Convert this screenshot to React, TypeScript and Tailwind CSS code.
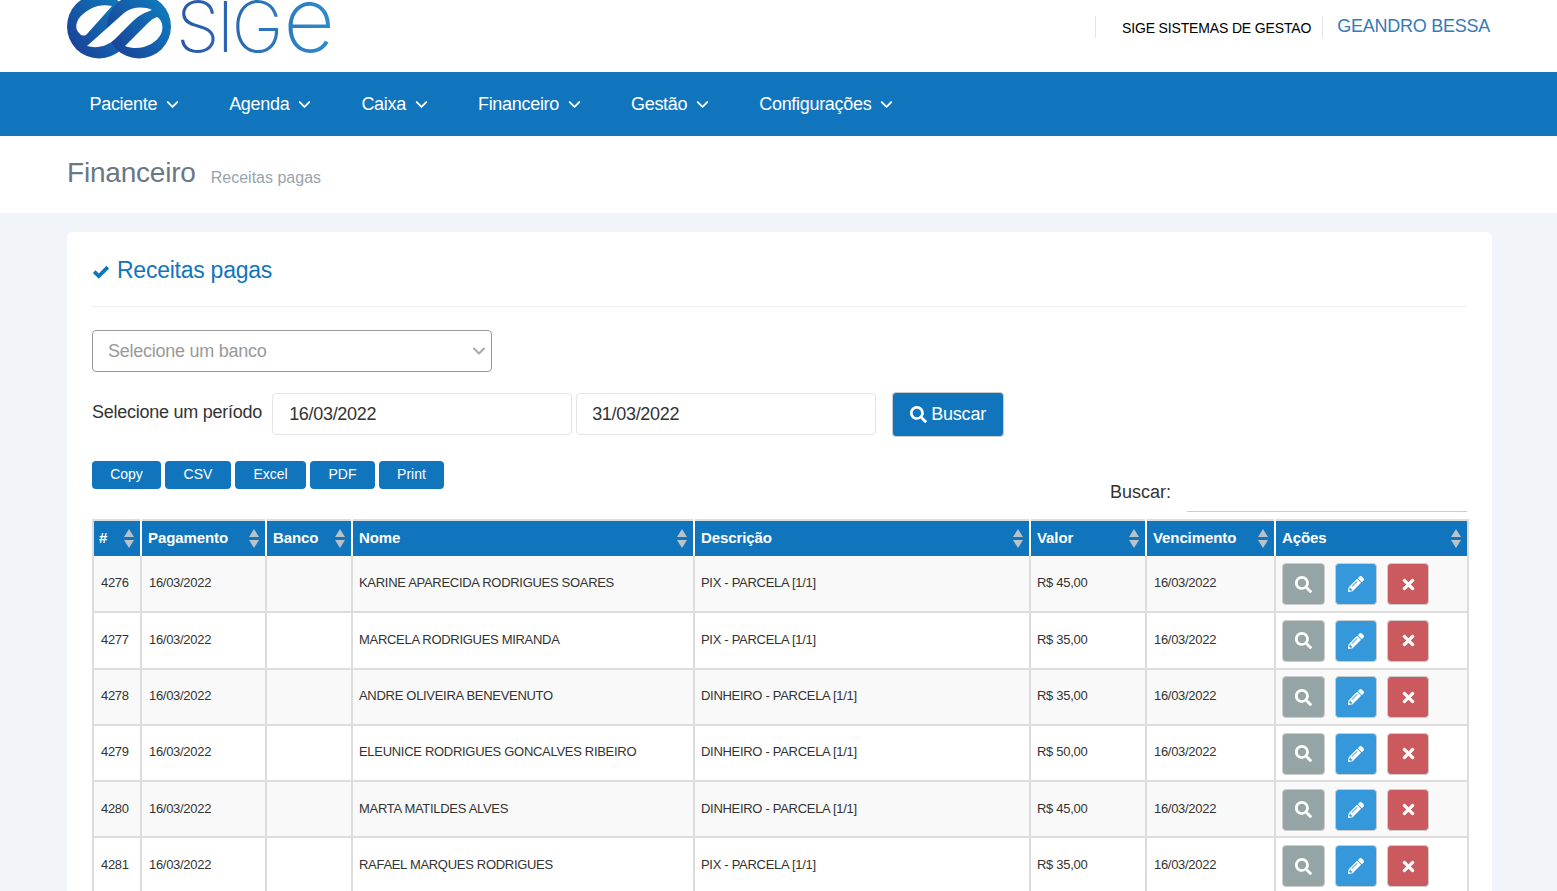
import { ChevronDown } from "lucide-react";
import { FaPencilAlt, FaSearch, FaTimes } from "react-icons/fa";

const menu = ["Paciente", "Agenda", "Caixa", "Financeiro", "Gestão", "Configurações"];

const rows = [
  { id: "4276", nome: "KARINE APARECIDA RODRIGUES SOARES", desc: "PIX - PARCELA [1/1]", valor: "R$ 45,00" },
  { id: "4277", nome: "MARCELA RODRIGUES MIRANDA", desc: "PIX - PARCELA [1/1]", valor: "R$ 35,00" },
  { id: "4278", nome: "ANDRE OLIVEIRA BENEVENUTO", desc: "DINHEIRO - PARCELA [1/1]", valor: "R$ 35,00" },
  { id: "4279", nome: "ELEUNICE RODRIGUES GONCALVES RIBEIRO", desc: "DINHEIRO - PARCELA [1/1]", valor: "R$ 50,00" },
  { id: "4280", nome: "MARTA MATILDES ALVES", desc: "DINHEIRO - PARCELA [1/1]", valor: "R$ 45,00" },
  { id: "4281", nome: "RAFAEL MARQUES RODRIGUES", desc: "PIX - PARCELA [1/1]", valor: "R$ 35,00" },
];

const heads = ["#", "Pagamento", "Banco", "Nome", "Descrição", "Valor", "Vencimento", "Ações"];

function Logo() {
  return (
    <div className="flex h-[60px] items-start">
      <svg width="105" height="60" viewBox="67 0 105 60" className="shrink-0" aria-hidden>
        <defs>
          <linearGradient id="mark" x1="0" y1="1" x2="1" y2="0.3">
            <stop offset="0" stopColor="#1b3a93" />
            <stop offset="1" stopColor="#0f7bbd" />
          </linearGradient>
        </defs>
        <circle cx="99" cy="26.5" r="32" fill="url(#mark)" />
        <circle cx="139" cy="26.5" r="32" fill="url(#mark)" />
        <path d="M112 6C100 3 88 8 80 17C75 23 75 30 80 34C82 36 85 36 87 34Z" fill="#fff" />
        <path d="M87 46L124 13C132 7 143 6 152 10C143 13 137 17 132 22L115 39C108 46 97 49 87 46Z" fill="#fff" />
        <path d="M125 46L148 23C151 20 154 18 157 17C162 20 164 27 161 34C156 44 140 52 125 46Z" fill="#fff" />
      </svg>
      <div className="ml-[4px] flex h-[60px] items-baseline bg-gradient-to-r from-[#2a55a8] to-[#2f8ccb] bg-clip-text font-['Inter'] leading-[40px] font-extralight text-transparent">
        <span className="text-[70px] tracking-[-3px]">SIG</span>
        <span className="ml-[3px] text-[90px]">e</span>
      </div>
    </div>
  );
}

function SortArrows() {
  return (
    <svg width="10" height="19" viewBox="0 0 10 19" className="shrink-0" aria-hidden>
      <path d="M5 0L10 8H0Z" fill="#b9c2c9" />
      <path d="M5 19L0 11H10Z" fill="#b9c2c9" />
    </svg>
  );
}

function ActionButton({ color, children }: { color: string; children: React.ReactNode }) {
  return (
    <button className={`flex h-[42px] items-center justify-center rounded-[4px] border border-[#ccc] text-white ${color}`}>
      {children}
    </button>
  );
}

export default function App() {
  return (
    <div className="h-[891px] overflow-hidden bg-[#f1f5fa] font-['Liberation_Sans',sans-serif] text-[#333]">
      <header className="flex h-[72px] items-start justify-between bg-white pr-[67px] pl-[67px]">
        <Logo />
        <div className="mt-4 flex items-start">
          <div className="flex h-[22px] items-center border-l border-[#e5e5e5] pt-[2px] pr-[11px] pl-[26px] text-sm tracking-[-0.15px] text-black">
            SIGE SISTEMAS DE GESTAO
          </div>
          <div className="flex h-[22px] items-center border-l border-[#e5e5e5] pb-[2px] pl-[14px] text-lg tracking-[-0.25px] text-[#337ab7]">
            GEANDRO BESSA
          </div>
        </div>
      </header>

      <nav className="flex h-16 items-center gap-[47px] bg-[#1075bd] pl-[89.5px] text-lg tracking-[-0.3px] text-white">
        {menu.map((item) => (
          <div key={item} className="flex items-center gap-[6px]">
            {item}
            <ChevronDown size={19} strokeWidth={2.4} />
          </div>
        ))}
      </nav>

      <div className="flex h-[77px] items-center gap-[15px] bg-white pb-1 pl-[67px]">
        <span className="text-[28px] tracking-[-0.2px] text-[#697882]">Financeiro</span>
        <span className="mt-[10px] text-base text-[#9aa4ab]">Receitas pagas</span>
      </div>

      <main className="mt-[19px] ml-[67px] h-[700px] w-[1425px] rounded-t-[6px] bg-white px-[25px]">
        <div className="flex h-[75px] items-center gap-[7px] border-b border-[#eee] pt-[2px] text-[23px] tracking-[-0.25px] text-[#1075bd]">
          <svg width="18" height="14" viewBox="0 0 18 14" className="mt-[3px] shrink-0" aria-hidden>
            <polyline points="2.2,6.6 6.8,11 15.8,2.2" fill="none" stroke="currentColor" strokeWidth="3.8" />
          </svg>
          Receitas pagas
        </div>

        <div className="mt-[23px] flex h-[42px] w-[400px] items-center justify-between rounded-[4px] border border-[#999] pr-[2px] pl-[15px] text-lg tracking-[-0.25px] text-[#999]">
          Selecione um banco
          <ChevronDown size={20} strokeWidth={2.5} className="text-[#aaa]" />
        </div>

        <div className="mt-[19px] flex h-[46px] items-center">
          <span className="mb-[4px] text-lg tracking-[-0.25px]">Selecione um período</span>
          <div className="ml-[10px] flex h-[42px] w-[300px] items-center rounded-[4px] border border-[#e5e5e5] pl-4 text-lg tracking-[-0.3px]">
            16/03/2022
          </div>
          <div className="ml-1 flex h-[42px] w-[300px] items-center rounded-[4px] border border-[#e5e5e5] pl-[15px] text-lg tracking-[-0.3px]">
            31/03/2022
          </div>
          <button className="ml-4 flex h-[45px] w-[112px] items-center justify-center gap-[4px] rounded-[4px] border border-[#ccc] bg-[#1075bd] text-lg tracking-[-0.2px] text-white">
            <FaSearch size={17} />
            Buscar
          </button>
        </div>

        <div className="flex h-[82px] items-start justify-between">
          <div className="mt-[24px] flex gap-1">
            {[
              ["Copy", "w-[69px]"],
              ["CSV", "w-[66px]"],
              ["Excel", "w-[71px]"],
              ["PDF", "w-[65px]"],
              ["Print", "w-[65px]"],
            ].map(([label, w]) => (
              <button key={label} className={`h-7 rounded-[4px] bg-[#1075bd] pb-[2px] text-sm text-white ${w}`}>
                {label}
              </button>
            ))}
          </div>
          <div className="mt-[37px] flex items-center gap-4">
            <span className="pb-[3px] text-lg">Buscar:</span>
            <div className="h-[38px] w-[280px] border-b border-[#ccc]" />
          </div>
        </div>

        <table className="w-[1375px] table-fixed border-collapse border-t-[2px] border-r-[2px] border-l-[2px] border-[#ddd] text-[13px] tracking-[-0.3px]">
          <colgroup>
            <col className="w-[48px]" />
            <col className="w-[125px]" />
            <col className="w-[86px]" />
            <col className="w-[342px]" />
            <col className="w-[336px]" />
            <col className="w-[116px]" />
            <col className="w-[129px]" />
            <col className="w-[193px]" />
          </colgroup>
          <thead>
            <tr className="h-9 bg-[#1075bd] text-white">
              {heads.map((h) => (
                <th key={h} className="border-l-2 border-white px-[6px] text-left text-[15px] font-bold tracking-[-0.1px] first:border-l-0 first:pl-[5px]">
                  <div className="flex items-center justify-between">
                    {h}
                    <SortArrows />
                  </div>
                </th>
              ))}
            </tr>
          </thead>
          <tbody>
            {rows.map((r, i) => (
              <tr key={r.id} className={`h-[56.3px] border-b-2 border-[#ddd] ${i % 2 === 0 ? "bg-[#f9f9f9]" : "bg-white"}`}>
                <td className="pb-[2px] pl-[7px]">{r.id}</td>
                <td className="border-l-2 border-[#ddd] pb-[2px] pl-[7px]">16/03/2022</td>
                <td className="border-l-2 border-[#ddd]" />
                <td className="border-l-2 border-[#ddd] pb-[2px] pl-[6px]">{r.nome}</td>
                <td className="border-l-2 border-[#ddd] pb-[2px] pl-[6px]">{r.desc}</td>
                <td className="border-l-2 border-[#ddd] pb-[2px] pl-[6px]">{r.valor}</td>
                <td className="border-l-2 border-[#ddd] pb-[2px] pl-[7px]">16/03/2022</td>
                <td className="border-l-2 border-[#ddd] pt-[1px] pl-[6px]">
                  <div className="flex gap-[10px]">
                    <ActionButton color="w-[43px] bg-[#95a5a6]">
                      <FaSearch size={17} />
                    </ActionButton>
                    <ActionButton color="w-[42px] bg-[#3498db]">
                      <FaPencilAlt size={16} />
                    </ActionButton>
                    <ActionButton color="w-[42px] bg-[#cb5a5e]">
                      <FaTimes size={17} />
                    </ActionButton>
                  </div>
                </td>
              </tr>
            ))}
          </tbody>
        </table>
      </main>
    </div>
  );
}
